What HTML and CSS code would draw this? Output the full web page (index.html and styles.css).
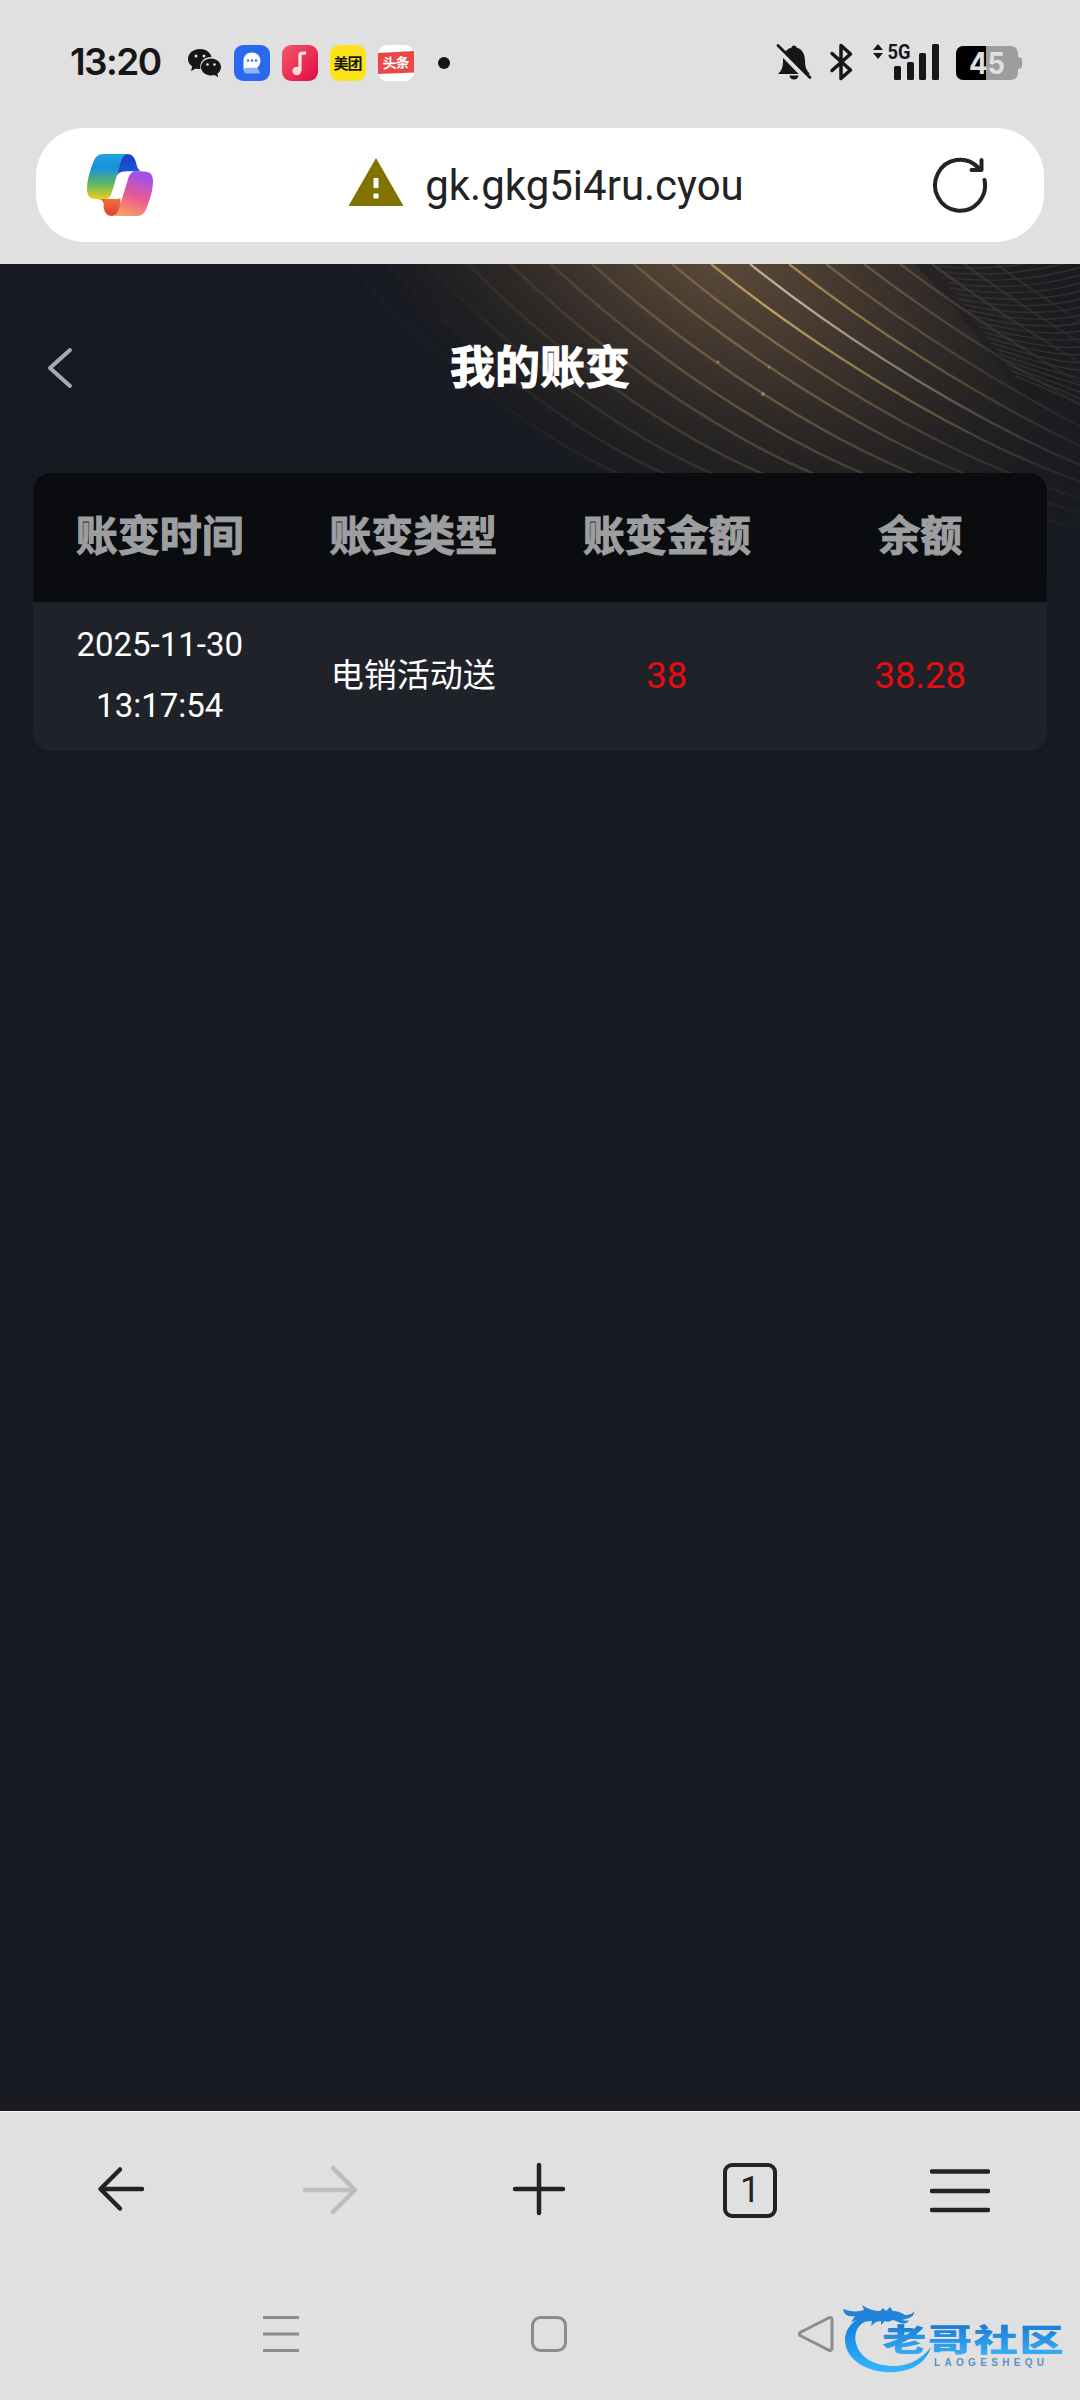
FILE: index.html
```html
<!DOCTYPE html>
<html lang="zh-CN">
<head>
  <meta charset="UTF-8" />
  <meta name="viewport" content="width=device-width, initial-scale=1.0"/>
  <title>我的账变</title>
  <link rel="stylesheet" href="styles.css">
</head>
<body>

  <div class="status-bar">
    <div class="status-left">
      <span class="clock">13:20</span>
      <svg class="app-icon" viewBox="0 0 36 36">
        <path fill="#161616" d="M14 4C7.400 4 2 8.300 2 14c0 3.200 1.700 5.800 4.200 7.600L5 26l5-2.600c1.500.400 2.600.600 4 .600h.500C13 17 18 11.800 25.500 12 24.500 7.300 19.700 4 14 4z"/>
        <path fill="#161616" d="M25 13.500c-5.600 0-10 3.800-10 8.500s4.400 8.500 10 8.500c1.200 0 2.300-.200 3.300-.500l4 2.200-1-3.400c2.200-1.600 3.700-4 3.700-6.800 0-4.700-4.400-8.500-10-8.500z"/>
        <g fill="#e0e0e0"><circle cx="10" cy="11" r="1.500"/><circle cx="18" cy="11" r="1.500"/><circle cx="21.500" cy="19.500" r="1.300"/><circle cx="28.500" cy="19.500" r="1.300"/></g>
      </svg>
      <svg class="app-icon" viewBox="0 0 36 36">
        <rect width="36" height="36" rx="9" fill="#2a68f0"/>
        <path fill="#8fb2fa" d="M11 21h12l3 7.500H12.500A2.500 2.500 0 0 1 10 26z"/>
        <path fill="#fff" d="M18 7.500c-5 0-8.500 3.500-8.500 8.300V26c0-2 1.500-3.300 3.500-3.300h10c2-1.300 3.500-4 3.500-6.900 0-4.800-3.500-8.300-8.500-8.300z"/>
        <g fill="#2a68f0"><circle cx="14" cy="15.500" r="1.200"/><circle cx="18" cy="15.500" r="1.200"/><circle cx="22" cy="15.500" r="1.200"/></g>
      </svg>
      <svg class="app-icon" viewBox="0 0 36 36">
        <defs><linearGradient id="music" x1="0" y1="0" x2="1" y2="1"><stop offset="0" stop-color="#f5586a"/><stop offset="1" stop-color="#df0b44"/></linearGradient></defs>
        <rect width="36" height="36" rx="9" fill="url(#music)"/>
        <ellipse cx="14.800" cy="26" rx="4.500" ry="4.300" fill="#ffd5d8"/>
        <path d="M18 26V10q0-1.500 1.500-1.700L24 7.800" fill="none" stroke="#ffe6e6" stroke-width="3.200"/>
      </svg>
      <svg class="app-icon" viewBox="0 0 36 36">
        <rect width="36" height="36" rx="9" fill="#ffe31a"/>
        <text x="3.500" y="23.500" class="app-label" textLength="29">美团</text>
      </svg>
      <svg class="app-icon" viewBox="0 0 36 36">
        <rect width="36" height="36" rx="9" fill="#fff"/>
        <path d="M0 8l36-2v21.500L0 29z" fill="#ec4747"/>
        <text x="4.500" y="23" class="app-label light" textLength="27" transform="rotate(-2 18 18)">头条</text>
      </svg>
      <span class="more-dot"></span>
    </div>
    <svg class="status-right" width="250" height="40" viewBox="0 0 250 40">
      <g fill="#161616">
        <!-- muted bell -->
        <path d="M3 34c4-4 5-7 5-13 0-7 3-12 8.500-13.500a2.600 2.600 0 0 1 5 0C27 9 30 14 30 21c0 5 1 9 5 13z"/>
        <path d="M14.500 35.500h9a4.500 4 0 0 1-9 0z"/>
        <path d="M2 8.500L32 39.500" stroke="#e0e0e0" stroke-width="4.500"/>
        <path d="M3 5.500L35 37.500" stroke="#161616" stroke-width="2.800" stroke-linecap="round"/>
        <!-- bluetooth -->
        <path d="M57 13.500L75.500 30 66 38.500V5.500l9.500 8.500L57 30.500" fill="none" stroke="#161616" stroke-width="3.500" stroke-linejoin="round" stroke-linecap="round"/>
        <!-- signal -->
        <path d="M98 10l5-6 5 6zM98 13l5 6 5-6z"/>
        <text x="112.500" y="19" class="net" textLength="23" lengthAdjust="spacingAndGlyphs">5G</text>
        <rect x="119" y="26" width="7" height="14" rx="1.500"/>
        <rect x="132" y="22" width="7" height="18" rx="1.500"/>
        <rect x="144" y="13" width="7" height="27" rx="1.500"/>
        <rect x="157" y="4" width="7" height="36" rx="1.500"/>
      </g>
      <!-- battery -->
      <path d="M211 6h25a7 7 0 0 1 7 7v4q4 0 4 3v6q0 3-4 3v4a7 7 0 0 1-7 7h-25z" fill="#9d9d9d"/>
      <path d="M211 6v34h-23a7 7 0 0 1-7-7V13a7 7 0 0 1 7-7z" fill="#000"/>
      <text x="194" y="34" class="battery-level" textLength="36" lengthAdjust="spacingAndGlyphs">45</text>
    </svg>
  </div>

  <div class="address-bar">
    <svg class="copilot" width="66" height="62" viewBox="0 0 66 62">
      <defs>
        <linearGradient id="cTop" x1="0" y1="0" x2="0" y2="1"><stop offset="0" stop-color="#1fa5df"/><stop offset=".3" stop-color="#1590de"/><stop offset=".65" stop-color="#5fb568"/><stop offset="1" stop-color="#e8d01c"/></linearGradient>
        <linearGradient id="cBottom" x1=".3" y1="0" x2="0" y2="1"><stop offset="0" stop-color="#a650e6"/><stop offset=".45" stop-color="#ec5a90"/><stop offset="1" stop-color="#fcae60"/></linearGradient>
        <linearGradient id="cBlue" x1="0" y1="0" x2="0" y2="1"><stop offset="0" stop-color="#1c3fc0"/><stop offset="1" stop-color="#1c5ae0"/></linearGradient>
        <linearGradient id="cRed" x1="0" y1="0" x2="0" y2="1"><stop offset="0" stop-color="#f67a40"/><stop offset="1" stop-color="#de4030"/></linearGradient>
      </defs>
      <path fill="url(#cBlue)" d="M32 0h8c5 0 7.500 3 9 8.500 1.300 5 2 8 6 9H38c-4 0-6 1-8 4z"/>
      <path fill="url(#cRed)" d="M14 45h10c5 0 6-1 9-4l1 13c-1 5-4 8-9 8-5 0-7-3-8.500-8.500C17.500 49 16 46 11 45z"/>
      <path fill="url(#cTop)" d="M16 0h26c-5 0-7 4-8.500 9L25 38c-1.500 5-3.500 7-8 7H9C2 45 0 41 0 35c0-8 3-19 6-26 2-6 5-9 10-9z"/>
      <path fill="url(#cBottom)" d="M50 62H24c5 0 7-4 8.500-9L41 25c1.500-5 3.500-7.500 8-7.500h8c7 0 9 4 9 10 0 8-3 18-6 25.500-2 6-5 9-10 9z"/>
      <path fill="#fff" d="M41 17.500h5c-3 1-4.500 4-5.500 7.500l-4.500 15c-1 3-3 5-7 5h-5c3-1 4-4 5-7l5-15c1-4 3-5.500 7-5.500z"/>
    </svg>
    <div class="site">
      <svg width="56" height="48" viewBox="0 0 56 48">
        <path d="M28 0l27.500 48H.500z" fill="#807300"/>
        <path d="M25.500 20h5v10h-5zM25.500 35.500h5v5h-5z" fill="#fff"/>
      </svg>
      <span class="url">gk.gkg5i4ru.cyou</span>
    </div>
    <svg class="reload" width="56" height="58" viewBox="0 0 56 58" fill="none" stroke="#232323" stroke-width="4" stroke-linecap="round" stroke-linejoin="round">
      <path d="M52.500 24A25 25.500 0 1 1 46 11.500"/>
      <path d="M49.500 4v10H39.500"/>
    </svg>
  </div>

  <div class="page">
    <svg class="page-bg" width="1080" height="340" viewBox="0 0 1080 340">
      <defs>
        <radialGradient id="glow" gradientUnits="userSpaceOnUse" cx="0" cy="0" r="1" gradientTransform="translate(715 -10) rotate(24) scale(400 240)">
          <stop offset="0" stop-color="#5c4b39"/><stop offset=".35" stop-color="#483b31" stop-opacity=".9"/><stop offset=".7" stop-color="#2b2726" stop-opacity=".75"/><stop offset="1" stop-color="#1d1d20" stop-opacity="0"/>
        </radialGradient>
        <radialGradient id="rim" gradientUnits="userSpaceOnUse" cx="0" cy="0" r="1" gradientTransform="translate(740 20) rotate(30) scale(450 270)">
          <stop offset="0" stop-color="#211f1f"/><stop offset=".65" stop-color="#1f1f20" stop-opacity=".9"/><stop offset="1" stop-color="#1b1c20" stop-opacity="0"/>
        </radialGradient>
        <radialGradient id="fade" gradientUnits="userSpaceOnUse" cx="0" cy="0" r="1" gradientTransform="translate(775 40) rotate(38) scale(370 270)">
          <stop offset="0" stop-color="#eee"/><stop offset=".3" stop-color="#999"/><stop offset=".65" stop-color="#3c3c3c"/><stop offset="1" stop-color="#0c0c0c"/>
        </radialGradient>
        <mask id="lineFade" maskUnits="userSpaceOnUse" x="0" y="0" width="1080" height="340"><rect width="1080" height="340" fill="url(#fade)"/></mask>
        <path id="ray" d="M0 0C80 65 180 130 270 175S420 235 520 265"/>
      </defs>
      <rect width="1080" height="340" fill="url(#rim)"/>
      <rect width="1080" height="340" fill="url(#glow)"/>
      <path d="M915 0c30 30 60 70 110 135h55V0z" fill="#1b1c20" opacity=".5"/>
      <g id="rays" mask="url(#lineFade)" fill="none" stroke="#8c744f" stroke-width="2.400"></g>
      <g id="mesh" fill="none" stroke="#3a3836" stroke-width="1.400" opacity=".7"></g>
      <g fill="#98805c"><circle cx="763" cy="130" r="2"/><circle cx="718" cy="98" r="1.500"/><circle cx="769" cy="103" r="1.500"/></g>
    </svg>

    <div class="page-header">
      <svg class="back" width="28" height="44" viewBox="0 0 28 44"><path d="M24 4L4 22l20 18" fill="none" stroke="#aaabb2" stroke-width="4" stroke-linecap="round" stroke-linejoin="round"/></svg>
      <h1>我的账变</h1>
    </div>

    <div class="table">
      <div class="row head">
        <div>账变时间</div>
        <div>账变类型</div>
        <div>账变金额</div>
        <div>余额</div>
      </div>
      <div class="row">
        <div>2025-11-30<br>13:17:54</div>
        <div>电销活动送</div>
        <div class="amount">38</div>
        <div class="amount">38.28</div>
      </div>
    </div>
  </div>

  <div class="toolbar">
    <svg viewBox="0 0 60 60"><path d="M52 29H12M30 9.500L10.500 29 30 48.500"/></svg>
    <svg viewBox="0 0 60 60" class="disabled"><path d="M5 30h50M33 8l22 22-22 22"/></svg>
    <svg viewBox="0 0 60 60"><path d="M5 29h48M29 5v48"/></svg>
    <div class="tabs">1</div>
    <svg viewBox="0 0 60 60"><path d="M2 11.500h56M2 31h56M2 50h56"/></svg>
  </div>

  <div class="nav-bar">
    <svg width="36" height="36" viewBox="0 0 36 36"><path d="M0 1.500h36M0 18h36M0 34.500h36"/></svg>
    <svg width="36" height="36" viewBox="0 0 36 36"><rect x="1.500" y="1.500" width="33" height="33" rx="8"/></svg>
    <svg width="36" height="36" viewBox="0 0 36 36"><path d="M3 16L30.500 2Q34 .500 34 4v28q0 3.500-3.500 2L3 20Q-.500 18 3 16z"/></svg>
  </div>

  <svg class="watermark" width="224" height="76" viewBox="0 0 224 76">
    <defs>
      <linearGradient id="wm" gradientUnits="userSpaceOnUse" x1="0" y1="0" x2="0" y2="72"><stop offset="0" stop-color="#2f7fce"/><stop offset=".4" stop-color="#1687e4"/><stop offset="1" stop-color="#35b8ff"/></linearGradient>
      <linearGradient id="wmText" x1="0" y1="0" x2="0" y2="1"><stop offset="0" stop-color="#1679d2"/><stop offset="1" stop-color="#3fb2fb"/></linearGradient>
    </defs>
    <g fill="url(#wm)">
      <path d="M28 13C8 19 0 31 4 46c5 17 27 27 50 25 19-2 31-11 35-25-9 12-22 19-37 19-20 0-35-9-38-23C11 30 18 20 32 17z"/>
      <path d="M1 8c8 3 15 3 21 1l-2-5c6 4 12 6 18 6l3-3 3 3 4-4 3 4c5 0 9 2 12 4 4 0 8-1 9-4 1 4-3 7-8 8l-4 1c3 1 5 1 7 0-2 4-5 4-8 3l-8-3-5 2-3-1-4 4v-4l-5 1-5 4 1-5c-8 0-14 3-18 7l3-8-6 2 4-6c-5 1-11 0-12-7z"/>
    </g>
    <text class="wm-name" fill="url(#wmText)" transform="translate(40 50) scale(1.430 1)" textLength="127">老哥社区</text>
    <text class="wm-sub" x="92" y="65" textLength="110">LAOGESHEQU</text>
  </svg>

  <script>
    const NS = "http://www.w3.org/2000/svg";

    // diagonal light rays, fanning out below the brightest one
    const rays = document.getElementById("rays");
    const bright = { 711: "#c7a667", 750: "#d0c0a8", 789: "#bd9960" };
    [350, 388, 427, 468, 510, 551, 592, 634, 672, 711, 750, 789, 826, 864, 900, 932, 964, 996].forEach(x => {
      const use = document.createElementNS(NS, "use");
      const lean = (x - 711) * (x > 711 ? 0.0005 : 0.00105);
      use.setAttribute("href", "#ray");
      use.setAttribute("transform", `matrix(1 0 ${lean} 1 ${x} 0)`);
      if (bright[x]) use.setAttribute("stroke", bright[x]);
      rays.appendChild(use);
    });

    // fine wave mesh in the top right corner
    const mesh = document.getElementById("mesh");
    for (let i = 0; i < 21; i++) {
      const path = document.createElementNS(NS, "path");
      const x = 935 + i * 4, y = 2 + i * 5.5;
      path.setAttribute("d", `M${x} ${y}Q${x + 70} ${y + 8 + i} 1085 ${y - 16 + i * 2.500}`);
      mesh.appendChild(path);
    }
  </script>

</body>
</html>
```
FILE: styles.css
```css
* {
  box-sizing: border-box;
}

body {
  margin: 0;
  width: 1080px;
  height: 2400px;
  background-color: #e0e0e0;
  font-family: Roboto, "Noto Sans CJK SC", sans-serif;
  display: flex;
  flex-direction: column;
  position: relative;
  overflow: hidden;
}

svg {
  display: block;
  flex: none;
}

/* status bar */
.status-bar {
  height: 128px;
  padding: 40px 55px 43px 70px;
  display: flex;
  justify-content: space-between;
}

.status-left {
  display: flex;
  align-items: center;
  gap: 12px;
}

.clock {
  width: 104px;
  font-family: Inter, sans-serif;
  font-size: 37px;
  font-weight: 600;
  line-height: 40px;
  letter-spacing: -1.6px;
  margin-top: -2px;
  color: #161616;
}

.app-icon {
  width: 36px;
  height: 36px;
}

.app-label {
  font-size: 15px;
  font-weight: 700;
  fill: #161616;
}

.app-label.light {
  fill: #fff;
  font-size: 14px;
}

.more-dot {
  width: 12px;
  height: 12px;
  margin-left: 12px;
  border-radius: 50%;
  background-color: #161616;
}

.status-right {
  overflow: visible;
}

.net {
  font-size: 21px;
  font-weight: 700;
}

.battery-level {
  font-family: Inter, sans-serif;
  font-size: 30px;
  font-weight: 700;
  fill: #e0e0e0;
}

/* address bar */
.address-bar {
  height: 114px;
  margin: 0 36px 22px;
  padding: 0 56px 0 51px;
  border-radius: 48px;
  background-color: #fff;
  display: flex;
  align-items: center;
  justify-content: space-between;
}

.site {
  display: flex;
  align-items: center;
  gap: 21px;
  padding: 2px 0 0 7px;
}

.site svg {
  margin-top: -9px;
}

.url {
  font-size: 42px;
  line-height: 50px;
  color: #232323;
}

/* page */
.page {
  position: relative;
  height: 1847px;
  background: linear-gradient(#181a23 98.8%, #1a1c1f);
}

.page-bg {
  position: absolute;
  top: 0;
  left: 0;
}

.page-header {
  position: relative;
  height: 209px;
  display: flex;
  align-items: center;
  justify-content: center;
}

.back {
  position: absolute;
  left: 46px;
  top: 82px;
}

h1 {
  margin: 0;
  font-size: 45px;
  line-height: 60px;
  font-weight: 700;
  color: #fff;
  -webkit-text-stroke: 1px #fff;
}

.table {
  position: relative;
  margin: 0 33px;
  border-radius: 18px;
  overflow: hidden;
  background-color: #20222a;
}

.row {
  height: 149px;
  padding-bottom: 3px;
  display: grid;
  grid-template-columns: repeat(4, 1fr);
  align-items: center;
  text-align: center;
  font-size: 33px;
  line-height: 61px;
  color: #fff;
}

.row.head {
  height: 129px;
  background-color: #0b0c0f;
  font-size: 42px;
  font-weight: 700;
  color: #9d9ea0;
  -webkit-text-stroke: 1px #9d9ea0;
}

.row .amount {
  font-size: 36.500px;
  color: #e60c11;
}

/* browser toolbar */
.toolbar {
  height: 157px;
  padding: 0 15px;
  border-top: 1px solid #f4f4f4;
  display: grid;
  grid-template-columns: repeat(5, 1fr);
  align-items: center;
  justify-items: center;
}

.toolbar svg {
  width: 60px;
  height: 60px;
  fill: none;
  stroke: #232323;
  stroke-width: 4.500;
  stroke-linecap: round;
  stroke-linejoin: round;
}

.toolbar .disabled {
  stroke: #bdbdbd;
}

.tabs {
  width: 54px;
  height: 55px;
  border: 4px solid #232323;
  border-radius: 9px;
  font-size: 36px;
  line-height: 47px;
  text-align: center;
  color: #232323;
}

/* system navigation */
.nav-bar {
  height: 132px;
  padding: 48px 246px 0 263px;
  display: flex;
  justify-content: space-between;
}

.nav-bar svg {
  fill: none;
  stroke: #8c8c8c;
  stroke-width: 3;
}

.watermark {
  position: absolute;
  left: 842px;
  top: 2301px;
  overflow: visible;
}

.wm-name {
  font-size: 31px;
  font-weight: 900;
}

.wm-sub {
  font-family: "Liberation Sans", sans-serif;
  font-size: 10px;
  font-weight: 700;
  fill: #5794c4;
}
```
